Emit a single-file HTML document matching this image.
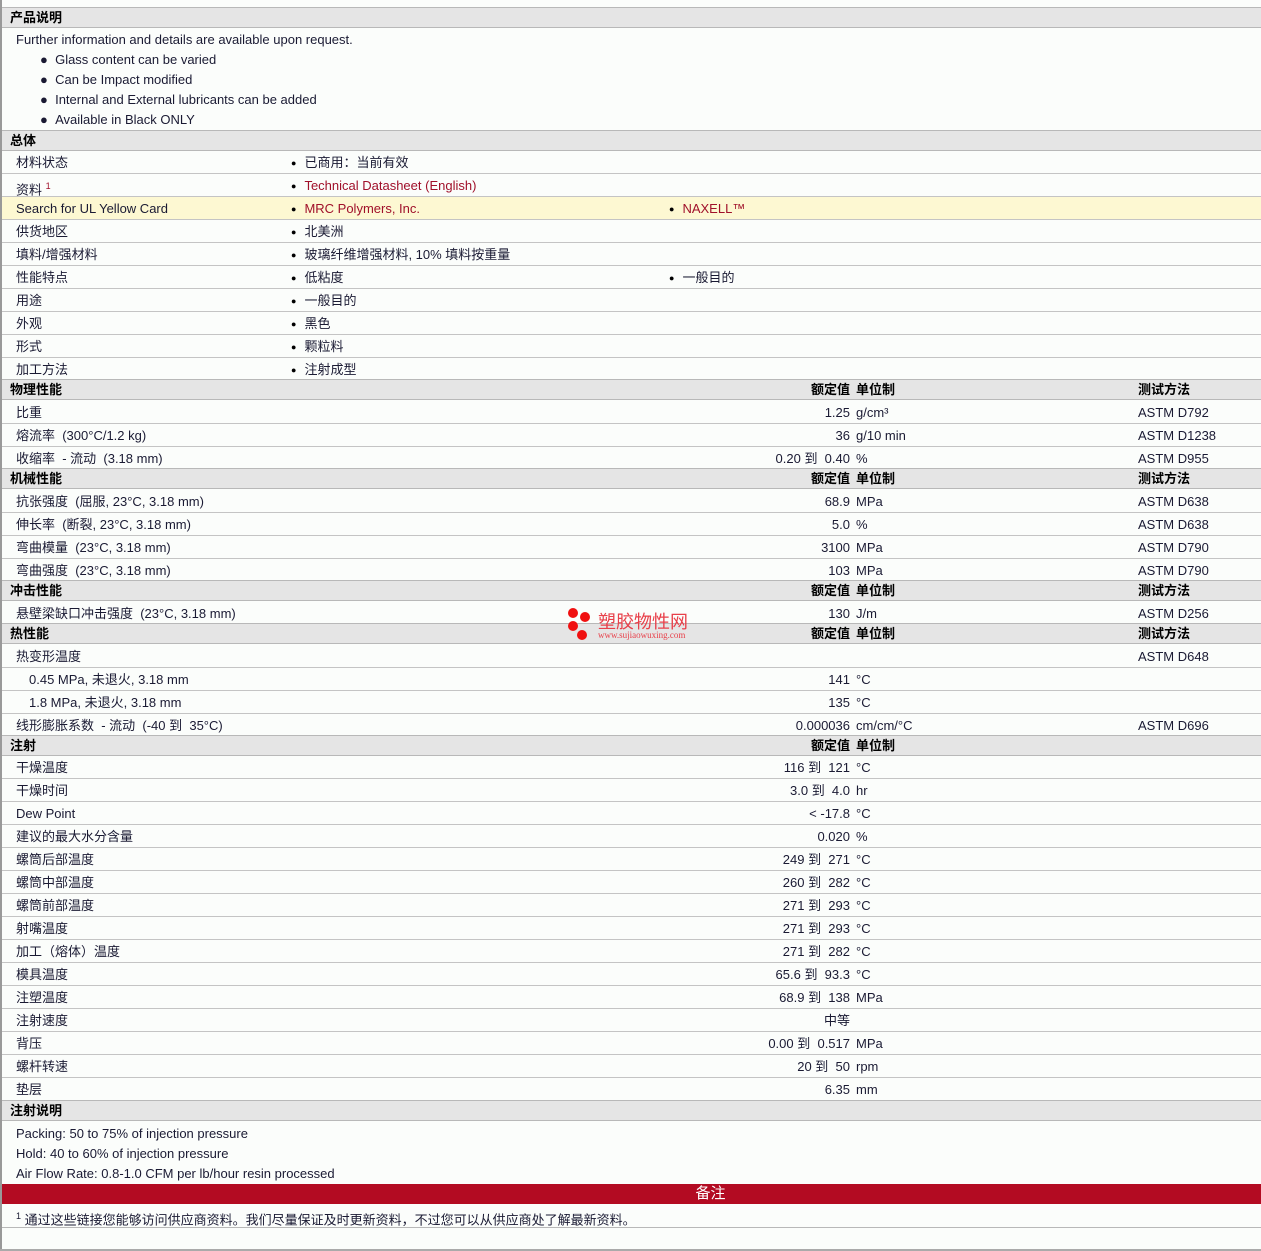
<!DOCTYPE html>
<html><head><meta charset="utf-8">
<style>
*{margin:0;padding:0;box-sizing:border-box}
body{width:1261px;height:1251px;background:#fbfdfb;position:relative;overflow:hidden;font-family:"Liberation Sans","Noto Sans CJK SC",sans-serif;font-size:13px;color:#1a1a33}
.lb{position:absolute;left:0;top:0;width:2px;height:1251px;background:#999}
.bb{position:absolute;left:0;right:0;top:1249px;height:2px;background:#aaa}
.r{position:absolute;left:2px;right:0;height:23px;border-bottom:1px solid #c4c4c4;line-height:24px;white-space:nowrap}
.h{position:absolute;left:2px;right:0;height:21px;background:#e5e5e5;border-top:1px solid #b8b8b8;border-bottom:1px solid #b8b8b8;font-weight:bold;line-height:20px;color:#000;white-space:nowrap}
.r span,.h span{position:absolute;top:0}
.l{left:14px}.hl{left:8px}
.b{left:289px}.b2{left:667px}
.b::before,.b2::before{content:"\25CF";font-size:9px;vertical-align:1px;margin-right:8px;color:#000}
.v{right:411px;text-align:right}
.u{left:854px}
.t{left:1136px}
a{color:#a0102a;text-decoration:none}
.y{background:#fdf8d2}
.txt{position:absolute;left:16px;line-height:20px;white-space:nowrap;padding-top:1px}
.red{position:absolute;left:2px;right:0;top:1184px;height:20px;background:#b30b22;color:#fff;text-align:center;font-size:15px;line-height:20px;padding-left:158px}
</style></head><body>
<div class="lb"></div>
<div class="h" style="top:7px"><span class="hl">产品说明</span></div>
<div class="txt" style="top:29px">Further information and details are available upon request.</div>
<div class="txt" style="top:49px;left:40px">●&nbsp;&nbsp;Glass content can be varied</div>
<div class="txt" style="top:69px;left:40px">●&nbsp;&nbsp;Can be Impact modified</div>
<div class="txt" style="top:89px;left:40px">●&nbsp;&nbsp;Internal and External lubricants can be added</div>
<div class="txt" style="top:109px;left:40px">●&nbsp;&nbsp;Available in Black ONLY</div>
<div class="h" style="top:130px"><span class="hl">总体</span></div>
<div class="r" style="top:151px"><span class="l">材料状态</span><span class="b">已商用：当前有效</span></div>
<div class="r" style="top:174px"><span class="l">资料 <sup style="font-size:9px;color:#a0102a">1</sup></span><span class="b"><a>Technical Datasheet (English)</a></span></div>
<div class="r y" style="top:197px"><span class="l">Search for UL Yellow Card</span><span class="b"><a>MRC Polymers, Inc.</a></span><span class="b2"><a>NAXELL™</a></span></div>
<div class="r" style="top:220px"><span class="l">供货地区</span><span class="b">北美洲</span></div>
<div class="r" style="top:243px"><span class="l">填料/增强材料</span><span class="b">玻璃纤维增强材料, 10% 填料按重量</span></div>
<div class="r" style="top:266px"><span class="l">性能特点</span><span class="b">低粘度</span><span class="b2">一般目的</span></div>
<div class="r" style="top:289px"><span class="l">用途</span><span class="b">一般目的</span></div>
<div class="r" style="top:312px"><span class="l">外观</span><span class="b">黑色</span></div>
<div class="r" style="top:335px"><span class="l">形式</span><span class="b">颗粒料</span></div>
<div class="r" style="top:358px"><span class="l">加工方法</span><span class="b">注射成型</span></div>

<div class="h" style="top:379px"><span class="hl">物理性能</span><span class="v">额定值</span><span class="u">单位制</span><span class="t">测试方法</span></div>
<div class="r" style="top:401px"><span class="l">比重</span><span class="v">1.25</span><span class="u">g/cm³</span><span class="t">ASTM D792</span></div>
<div class="r" style="top:424px"><span class="l">熔流率&nbsp;&nbsp;(300°C/1.2 kg)</span><span class="v">36</span><span class="u">g/10 min</span><span class="t">ASTM D1238</span></div>
<div class="r" style="top:447px"><span class="l">收缩率&nbsp;&nbsp;- 流动&nbsp;&nbsp;(3.18 mm)</span><span class="v">0.20 到&nbsp;&nbsp;0.40</span><span class="u">%</span><span class="t">ASTM D955</span></div>
<div class="h" style="top:468px"><span class="hl">机械性能</span><span class="v">额定值</span><span class="u">单位制</span><span class="t">测试方法</span></div>
<div class="r" style="top:490px"><span class="l">抗张强度&nbsp;&nbsp;(屈服, 23°C, 3.18 mm)</span><span class="v">68.9</span><span class="u">MPa</span><span class="t">ASTM D638</span></div>
<div class="r" style="top:513px"><span class="l">伸长率&nbsp;&nbsp;(断裂, 23°C, 3.18 mm)</span><span class="v">5.0</span><span class="u">%</span><span class="t">ASTM D638</span></div>
<div class="r" style="top:536px"><span class="l">弯曲模量&nbsp;&nbsp;(23°C, 3.18 mm)</span><span class="v">3100</span><span class="u">MPa</span><span class="t">ASTM D790</span></div>
<div class="r" style="top:559px"><span class="l">弯曲强度&nbsp;&nbsp;(23°C, 3.18 mm)</span><span class="v">103</span><span class="u">MPa</span><span class="t">ASTM D790</span></div>
<div class="h" style="top:580px"><span class="hl">冲击性能</span><span class="v">额定值</span><span class="u">单位制</span><span class="t">测试方法</span></div>
<div class="r" style="top:602px"><span class="l">悬壁梁缺口冲击强度&nbsp;&nbsp;(23°C, 3.18 mm)</span><span class="v">130</span><span class="u">J/m</span><span class="t">ASTM D256</span></div>
<div class="h" style="top:623px"><span class="hl">热性能</span><span class="v">额定值</span><span class="u">单位制</span><span class="t">测试方法</span></div>
<div class="r" style="top:645px"><span class="l">热变形温度</span><span class="t">ASTM D648</span></div>
<div class="r" style="top:668px"><span class="l" style="left:27px">0.45 MPa, 未退火, 3.18 mm</span><span class="v">141</span><span class="u">°C</span></div>
<div class="r" style="top:691px"><span class="l" style="left:27px">1.8 MPa, 未退火, 3.18 mm</span><span class="v">135</span><span class="u">°C</span></div>
<div class="r" style="top:714px"><span class="l">线形膨胀系数&nbsp;&nbsp;- 流动&nbsp;&nbsp;(-40 到&nbsp;&nbsp;35°C)</span><span class="v">0.000036</span><span class="u">cm/cm/°C</span><span class="t">ASTM D696</span></div>
<div class="h" style="top:735px"><span class="hl">注射</span><span class="v">额定值</span><span class="u">单位制</span></div>
<div class="r" style="top:756px"><span class="l">干燥温度</span><span class="v">116 到&nbsp;&nbsp;121</span><span class="u">°C</span></div>
<div class="r" style="top:779px"><span class="l">干燥时间</span><span class="v">3.0 到&nbsp;&nbsp;4.0</span><span class="u">hr</span></div>
<div class="r" style="top:802px"><span class="l">Dew Point</span><span class="v">&lt; -17.8</span><span class="u">°C</span></div>
<div class="r" style="top:825px"><span class="l">建议的最大水分含量</span><span class="v">0.020</span><span class="u">%</span></div>
<div class="r" style="top:848px"><span class="l">螺筒后部温度</span><span class="v">249 到&nbsp;&nbsp;271</span><span class="u">°C</span></div>
<div class="r" style="top:871px"><span class="l">螺筒中部温度</span><span class="v">260 到&nbsp;&nbsp;282</span><span class="u">°C</span></div>
<div class="r" style="top:894px"><span class="l">螺筒前部温度</span><span class="v">271 到&nbsp;&nbsp;293</span><span class="u">°C</span></div>
<div class="r" style="top:917px"><span class="l">射嘴温度</span><span class="v">271 到&nbsp;&nbsp;293</span><span class="u">°C</span></div>
<div class="r" style="top:940px"><span class="l">加工（熔体）温度</span><span class="v">271 到&nbsp;&nbsp;282</span><span class="u">°C</span></div>
<div class="r" style="top:963px"><span class="l">模具温度</span><span class="v">65.6 到&nbsp;&nbsp;93.3</span><span class="u">°C</span></div>
<div class="r" style="top:986px"><span class="l">注塑温度</span><span class="v">68.9 到&nbsp;&nbsp;138</span><span class="u">MPa</span></div>
<div class="r" style="top:1009px"><span class="l">注射速度</span><span class="v">中等</span></div>
<div class="r" style="top:1032px"><span class="l">背压</span><span class="v">0.00 到&nbsp;&nbsp;0.517</span><span class="u">MPa</span></div>
<div class="r" style="top:1055px"><span class="l">螺杆转速</span><span class="v">20 到&nbsp;&nbsp;50</span><span class="u">rpm</span></div>
<div class="r" style="top:1078px"><span class="l">垫层</span><span class="v">6.35</span><span class="u">mm</span></div>
<div class="h" style="top:1100px"><span class="hl">注射说明</span></div>
<div class="txt" style="top:1123px">Packing: 50 to 75% of injection pressure</div>
<div class="txt" style="top:1143px">Hold: 40 to 60% of injection pressure</div>
<div class="txt" style="top:1163px">Air Flow Rate: 0.8-1.0 CFM per lb/hour resin processed</div>
<div class="red">备注</div>
<div class="r" style="top:1205px;height:23px;line-height:22px;border-bottom:1px solid #b8b8b8"><span class="l"><sup style="font-size:9px">1</sup> 通过这些链接您能够访问供应商资料。我们尽量保证及时更新资料，不过您可以从供应商处了解最新资料。</span></div>

<div style="position:absolute;left:568px;top:608px;width:10px;height:10px;border-radius:50%;background:#f01010"></div>
<div style="position:absolute;left:580px;top:612px;width:10px;height:10px;border-radius:50%;background:#f01010"></div>
<div style="position:absolute;left:568px;top:621px;width:10px;height:10px;border-radius:50%;background:#f01010"></div>
<div style="position:absolute;left:577px;top:630px;width:10px;height:10px;border-radius:50%;background:#f01010"></div>
<div style="position:absolute;left:598px;top:612px;color:#e8404a;font-size:18px;line-height:19px;font-family:'Noto Sans CJK SC',sans-serif">塑胶物性网</div>
<div style="position:absolute;left:598px;top:631px;color:#e8404a;font-size:9px;line-height:9px;font-family:'Liberation Serif',serif">www.sujiaowuxing.com</div>
<div class="bb"></div>
</body></html>
